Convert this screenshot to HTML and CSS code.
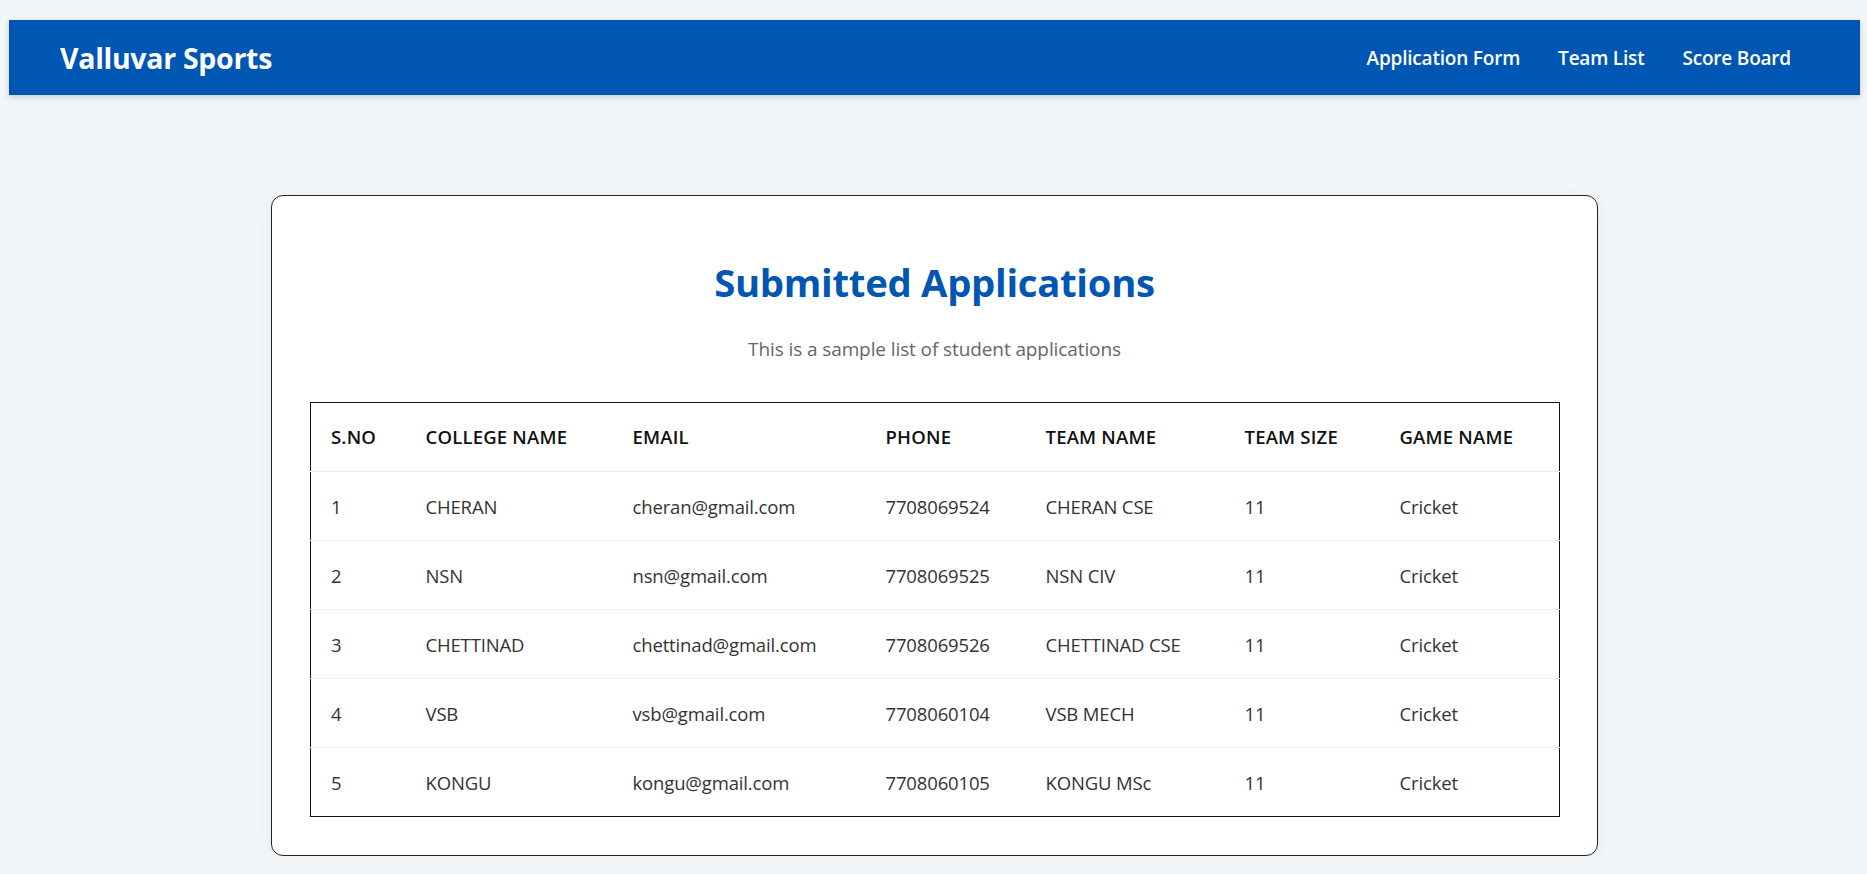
FILE: index.html
```html
<!DOCTYPE html>
<html lang="en">
<head>
<meta charset="utf-8">
<title>Valluvar Sports - Submitted Applications</title>
<link rel="stylesheet" href="styles.css">
</head>
<body>
<nav class="navbar">
  <div class="brand">Valluvar Sports</div>
  <ul class="nav-links">
    <li><a href="#">Application Form</a></li>
    <li><a href="#">Team List</a></li>
    <li><a href="#">Score Board</a></li>
  </ul>
</nav>
<main class="page">
  <section class="card">
    <h1 class="title">Submitted Applications</h1>
    <p class="subtitle">This is a sample list of student applications</p>
    <table class="apps">
      <colgroup>
        <col class="c1"><col class="c2"><col class="c3"><col class="c4"><col class="c5"><col class="c6"><col class="c7">
      </colgroup>
      <thead>
        <tr><th>S.NO</th><th>COLLEGE NAME</th><th>EMAIL</th><th>PHONE</th><th>TEAM NAME</th><th>TEAM SIZE</th><th>GAME NAME</th></tr>
      </thead>
      <tbody>
        <tr><td>1</td><td>CHERAN</td><td>cheran@gmail.com</td><td>7708069524</td><td>CHERAN CSE</td><td>11</td><td>Cricket</td></tr>
        <tr><td>2</td><td>NSN</td><td>nsn@gmail.com</td><td>7708069525</td><td>NSN CIV</td><td>11</td><td>Cricket</td></tr>
        <tr><td>3</td><td>CHETTINAD</td><td>chettinad@gmail.com</td><td>7708069526</td><td>CHETTINAD CSE</td><td>11</td><td>Cricket</td></tr>
        <tr><td>4</td><td>VSB</td><td>vsb@gmail.com</td><td>7708060104</td><td>VSB MECH</td><td>11</td><td>Cricket</td></tr>
        <tr><td>5</td><td>KONGU</td><td>kongu@gmail.com</td><td>7708060105</td><td>KONGU MSc</td><td>11</td><td>Cricket</td></tr>
      </tbody>
    </table>
  </section>
</main>
</body>
</html>
```
FILE: styles.css
```css
* { box-sizing: border-box; }

html, body {
  background: #f3f6f9;
}

body {
  margin: 0;
  padding: 20px 7px 0 9px;
  font-family: "Open Sans", "Noto Sans", sans-serif;
  color: #222;
}

.navbar {
  height: 75px;
  background: #0056b3;
  display: flex;
  align-items: center;
  justify-content: space-between;
  padding: 0 60px 0 51px;
  box-shadow: 0 2px 6px rgba(0, 0, 0, 0.18);
}

.brand {
  color: #fff;
  font-size: 28.5px;
  font-weight: 700;
  letter-spacing: -0.3px;
}

.nav-links {
  list-style: none;
  margin: 0;
  padding: 0;
  display: flex;
  gap: 20px;
}

.nav-links a {
  display: block;
  color: #fff;
  text-decoration: none;
  font-size: 19px;
  font-weight: 600;
  padding: 8px 9px;
  letter-spacing: -0.2px;
}

.page {
  display: flex;
  justify-content: center;
  padding-top: 100px;
}

.card {
  width: 1327px;
  background: #fff;
  border: 1px solid #222;
  border-radius: 12px;
  padding: 38px;
  box-shadow: 0 4px 16px rgba(0, 0, 0, 0.06);
}

.title {
  margin: 23px 0 0;
  text-align: center;
  color: #0056b3;
  font-size: 38.3px;
  font-weight: 700;
  line-height: 50px;
  letter-spacing: -0.3px;
}

.subtitle {
  margin: 29px 0 0;
  text-align: center;
  color: #666;
  font-size: 19px;
  line-height: 26px;
  letter-spacing: -0.1px;
}

.apps {
  width: 100%;
  margin-top: 40px;
  border-collapse: collapse;
  border: 1px solid #111;
  table-layout: fixed;
}

.c1 { width: 95px; }
.c2 { width: 207px; }
.c3 { width: 253px; }
.c4 { width: 160px; }
.c5 { width: 199px; }
.c6 { width: 155px; }
.c7 { width: 180px; }

.apps th,
.apps td {
  text-align: left;
  padding: 22px 10px 22px 20px;
  line-height: 24px;
  border-bottom: 1px solid #eee;
  white-space: nowrap;
}

.apps th {
  font-size: 18.5px;
  font-weight: 600;
  color: #111;
  letter-spacing: 0.2px;
}

.apps td {
  font-size: 18.5px;
  color: #333;
  letter-spacing: -0.15px;
  padding-top: 23px;
  padding-bottom: 21px;
}

.apps tbody tr:last-child td {
  border-bottom: none;
}
```
